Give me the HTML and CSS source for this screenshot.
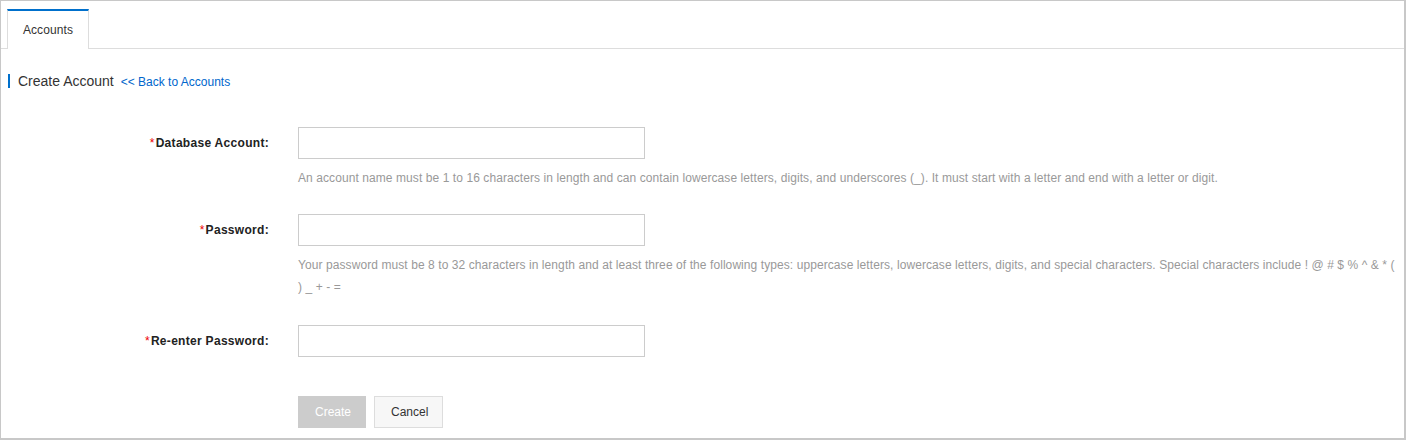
FILE: index.html
```html
<!DOCTYPE html>
<html>
<head>
<meta charset="utf-8">
<link rel="stylesheet" href="styles.css">
</head>
<body>
<div class="frame">
  <div class="tabs">
    <div class="tab active">Accounts</div>
  </div>
  <div class="title-row">
    <span class="title">Create Account</span>
    <a class="back" href="#">&lt;&lt; Back to Accounts</a>
  </div>
  <form class="form">
    <div class="group">
      <label class="label"><span class="req">*</span>Database Account:</label>
      <div class="control">
        <input class="input" type="text">
        <div class="help">An account name must be 1 to 16 characters in length and can contain lowercase letters, digits, and underscores (_). It must start with a letter and end with a letter or digit.</div>
      </div>
    </div>
    <div class="group tall">
      <label class="label"><span class="req">*</span>Password:</label>
      <div class="control">
        <input class="input" type="password">
        <div class="help">Your password must be 8 to 32 characters in length and at least three of the following types: uppercase letters, lowercase letters, digits, and special characters. Special characters include ! @ # $ % ^ &amp; * ( ) _ + - =</div>
      </div>
    </div>
    <div class="group last">
      <label class="label"><span class="req">*</span>Re-enter Password:</label>
      <div class="control">
        <input class="input" type="password">
      </div>
    </div>
    <div class="actions">
      <button type="button" class="btn btn-primary" disabled>Create</button>
      <button type="button" class="btn btn-default">Cancel</button>
    </div>
  </form>
</div>
</body>
</html>
```
FILE: styles.css
```css
* { box-sizing: border-box; }
html, body { margin: 0; padding: 0; background: #fff; }
body {
  font-family: "Liberation Sans", Arial, sans-serif;
  font-size: 12px;
  color: #333;
}
.frame {
  width: 1406px;
  height: 440px;
  border: 1px solid #c8c8c8;
  border-right-width: 2px;
  border-bottom-width: 2px;
  overflow: hidden;
}
.tabs {
  display: flex;
  height: 48px;
  border-bottom: 1px solid #dddddd;
  padding-left: 6px;
  padding-top: 8px;
}
.tab {
  width: 82px;
  height: 40px;
  border: 1px solid #dddddd;
  border-top: 2px solid #0070cc;
  border-bottom: none;
  background: #fff;
  display: flex;
  align-items: center;
  justify-content: center;
  font-size: 12px;
  color: #333;
  margin-bottom: -1px;
  padding-bottom: 1px;
  letter-spacing: 0.1px;
}
.title-row {
  display: flex;
  align-items: center;
  margin: 25px 0 0 7px;
  height: 14px;
  border-left: 2px solid #0070cc;
  padding-left: 8px;
}
.title {
  font-size: 14px;
  color: #333;
}
.back {
  margin-left: 7px;
  font-size: 12px;
  color: #0066cc;
  text-decoration: none;
  padding-top: 2px;
}
.form {
  margin-top: 39px;
  padding-left: 7px;
}
.group {
  display: flex;
  align-items: flex-start;
  margin-bottom: 25px;
}
.group.tall { margin-bottom: 27px; }
.group.last { margin-bottom: 39px; }
.label {
  width: 261px;
  flex: none;
  text-align: right;
  font-weight: bold;
  color: #222;
  line-height: 32px;
  height: 32px;
  margin-right: 29px;
  letter-spacing: 0.3px;
}
.req { color: #e00; font-weight: normal; margin-right: 1px; }
.control {
  flex: 1;
  padding-right: 4px;
}
.input {
  display: block;
  width: 347px;
  height: 32px;
  border: 1px solid #cccccc;
  margin: 0;
  padding: 0 8px;
  font: inherit;
  outline: none;
}
.help {
  color: #999;
  line-height: 22px;
  margin-top: 8px;
  letter-spacing: 0.08px;
}
.actions {
  display: flex;
  gap: 8px;
  padding-left: 290px;
}
.btn {
  height: 32px;
  padding: 0 16px;
  font: inherit;
  font-size: 12px;
  border: 1px solid #dddddd;
  cursor: pointer;
  margin: 0;
}
.btn-primary {
  width: 68px;
  background: #cccccc;
  border-color: #cccccc;
  color: #fff;
}
.btn-default {
  width: 69px;
  background: #f7f7f7;
  color: #333;
}
```
